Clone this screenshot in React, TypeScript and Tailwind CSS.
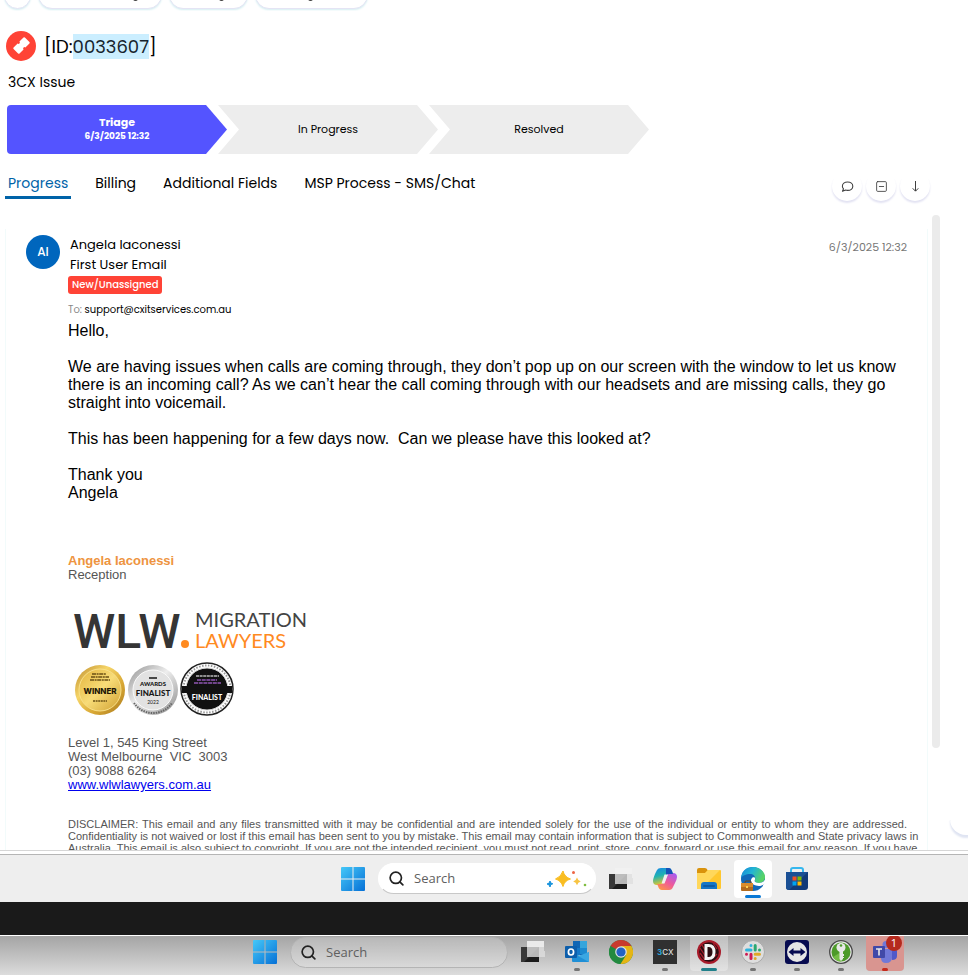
import type { ReactNode } from "react";
import { Search, SquareMinus } from "lucide-react";

const ui = "font-['Poppins','Inter',sans-serif]";

const steps = [
  { label: "Triage", date: "6/3/2025 12:32" },
  { label: "In Progress" },
  { label: "Resolved" },
];

const tabs = ["Progress", "Billing", "Additional Fields", "MSP Process - SMS/Chat"];

const disclaimer = [
  "DISCLAIMER: This email and any files transmitted with it may be confidential and are intended solely for the use of the individual or entity to whom they are addressed.",
  "Confidentiality is not waived or lost if this email has been sent to you by mistake. This email may contain information that is subject to Commonwealth and State privacy laws in",
  "Australia. This email is also subject to copyright. If you are not the intended recipient, you must not read, print, store, copy, forward or use this email for any reason. If you have",
];

const Pill = ({ width, mark }: { width: string; mark?: string }) => (
  <button
    type="button"
    aria-label="Action"
    className={`${width} flex h-7 shrink-0 items-end justify-end rounded-full border border-[#e4e4f4] bg-white pb-[7px] shadow-[0_1px_2px_#d5eef2]`}
  >
    {mark && <span className={`${mark} h-[3px] w-[5px] rounded-b bg-neutral-700`} />}
  </button>
);

const TopActions = () => (
  <div className="flex h-[11px] items-end gap-[7px] overflow-hidden pb-[2px] pl-[4px]">
    <Pill width="w-[27px]" />
    <Pill width="w-[124px]" mark="mr-[23px]" />
    <Pill width="w-[79px]" mark="mr-[23px]" />
    <Pill width="w-[113px]" mark="mr-[54px]" />
  </div>
);

const TicketHeader = () => (
  <header>
    <div className="mt-5 flex items-center gap-2 pl-[6px]">
      <svg viewBox="0 0 30 30" className="size-[30px]" aria-hidden="true">
        <circle cx="15" cy="15" r="15" fill="#ff4336" />
        <path
          d="M-7-4.200h5.700a1.300 1.300 0 0 0 2.600 0H7q1 0 1 1v6.400q0 1-1 1H1.300a1.300 1.300 0 0 0-2.600 0H-7q-1 0-1-1v-6.400q0-1 1-1z"
          fill="#fff"
          transform="translate(15.5 14.500) rotate(-45)"
        />
      </svg>
      <h1 className="pt-[2px] text-[18px] leading-[28px]">
        [ID:<span className="bg-[#cbeeff] text-[#17242e]">0033607</span>]
      </h1>
    </div>
    <p className="mt-[11px] pl-2 text-[14px] leading-5">3CX Issue</p>
  </header>
);

const Steps = () => (
  <ol className="mt-[13px] flex pl-[7px] text-center text-[11px]">
    {steps.map((step, i) => (
      <li
        key={step.label}
        className={
          i === 0
            ? "flex h-[49px] w-[220px] flex-col justify-center rounded-l bg-[#5454ff] pt-px font-bold text-white [clip-path:polygon(0_0,calc(100%_-_21px)_0,100%_50%,calc(100%_-_21px)_100%,0_100%)]"
            : "-ml-[9px] flex h-[49px] w-[220px] flex-col justify-center bg-[#ededed] [clip-path:polygon(0_0,calc(100%_-_21px)_0,100%_50%,calc(100%_-_21px)_100%,0_100%,21px_50%)]"
        }
      >
        <span className="leading-[13px]">{step.label}</span>
        {step.date && <span className="text-[9px] leading-[15px]">{step.date}</span>}
      </li>
    ))}
  </ol>
);

const RoundButton = ({ label, children }: { label: string; children: ReactNode }) => (
  <button
    type="button"
    aria-label={label}
    className="flex size-[30px] shrink-0 items-center justify-center rounded-full bg-white text-neutral-700 shadow-[0_2px_2px_#e2e2f2]"
  >
    {children}
  </button>
);

const TabBar = () => (
  <div className="mt-[16px] flex items-start justify-between pr-[36px] pl-[5px]">
    <nav className="flex gap-[21px] text-[14px] leading-[26px]">
      {tabs.map((tab, i) => (
        <button
          key={tab}
          type="button"
          className={
            i === 0
              ? "border-b-3 border-[#0063a8] px-[3px] text-[#0063a8]"
              : "border-b-3 border-transparent px-[3px]"
          }
        >
          {tab}
        </button>
      ))}
    </nav>
    <div className="mt-[9px] flex h-[26px] items-end gap-1 overflow-hidden px-[2px] pb-[4px]">
      <RoundButton label="Comment">
        <svg viewBox="0 0 13 13" className="size-[13px]" fill="none" stroke="currentColor" strokeWidth="1.100">
          <path d="M1.500 11.300L2.500 8.800Q1.400 7.600 1.400 6.200C1.400 3.800 3.600 2 6.600 2s5.200 1.800 5.200 4.200-2.200 4.200-5.200 4.200q-1 0-1.900-.3z" strokeLinejoin="round" />
        </svg>
      </RoundButton>
      <RoundButton label="Collapse">
        <SquareMinus size={13} strokeWidth={1.6} />
      </RoundButton>
      <RoundButton label="Newest">
        <svg viewBox="0 0 13 13" className="size-[13px]" fill="none" stroke="currentColor" strokeWidth="1">
          <path d="M6.500 1v10M3.700 8.300l2.800 2.900 2.800-2.900" />
        </svg>
      </RoundButton>
    </div>
  </div>
);

const SignatureLogo = () => (
  <svg
    viewBox="0 0 242 114"
    width="242"
    height="114"
    className="mt-[23px] font-['Lato',sans-serif]"
    role="img"
    aria-label="WLW Migration Lawyers"
  >
    <defs>
      <linearGradient id="gold" x2="1" y2="1">
        <stop stopColor="#b9882a" />
        <stop offset=".35" stopColor="#f6d568" />
        <stop offset=".65" stopColor="#d9a834" />
        <stop offset="1" stopColor="#a97a1e" />
      </linearGradient>
      <linearGradient id="goldFace" x2="1" y2="1">
        <stop stopColor="#e3b43c" />
        <stop offset=".5" stopColor="#f8dc78" />
        <stop offset="1" stopColor="#cf9f30" />
      </linearGradient>
      <linearGradient id="silver" x2="1" y2="1">
        <stop stopColor="#8f8f8f" />
        <stop offset=".45" stopColor="#eeeeee" />
        <stop offset="1" stopColor="#8b8b8b" />
      </linearGradient>
    </defs>
    <text x="5" y="43" fontSize="48" fontWeight="500" fill="#353535" className="font-['Roboto',sans-serif]">WLW</text>
    <circle cx="117" cy="39" r="4" fill="#ff8a1f" />
    <text x="127" y="22" fontSize="20" fill="#444">MIGRATION</text>
    <text x="127" y="43" fontSize="20" fill="#ff8a1f">LAWYERS</text>

    <circle cx="32" cy="85" r="25" fill="url(#gold)" />
    <circle cx="32" cy="85" r="21" fill="url(#goldFace)" stroke="#f8e08a" />
    <path d="M24 69h14M23 72h18M22 75h20" stroke="#6b5015" strokeWidth="1.5" strokeDasharray="4 .6 2 .6" />
    <text x="32" y="89" fontSize="8" fontWeight="800" fill="#1d1605" textAnchor="middle" className="font-['Inter',sans-serif]">WINNER</text>
    <path d="M25 96h14" stroke="#6b5015" strokeWidth="1.3" strokeDasharray="2 .6" />

    <circle cx="85" cy="85" r="25" fill="url(#silver)" />
    <circle cx="85" cy="85" r="20" fill="#e2e2e2" stroke="#fafafa" />
    <path d="M66 98a23 23 0 0 0 38 0" fill="none" stroke="#666" strokeWidth="2" strokeDasharray="1.5 1" />
    <g textAnchor="middle" fill="#161616" fontWeight="900">
      <path d="M81 73h8" stroke="#222" strokeWidth="1.6" />
      <text x="85" y="81" fontSize="6">AWARDS</text>
      <text x="85" y="91" fontSize="8">FINALIST</text>
      <text x="85" y="99" fontSize="5" fontWeight="400">2022</text>
    </g>

    <circle cx="139" cy="84" r="26" fill="#fff" stroke="#222" strokeWidth="1.5" />
    <circle cx="139" cy="84" r="23.5" fill="none" stroke="#999" strokeWidth="2" strokeDasharray="1.5 1.5" />
    <circle cx="139" cy="84" r="21" fill="#111" stroke="#ddd" />
    <path d="M114 81h50v7h-50z" fill="#111" />
    <path d="M128 71h23" stroke="#bbb" strokeWidth="1.6" strokeDasharray="3 .6" />
    <path d="M129 75h20M126 78h27" stroke="#70458b" strokeWidth="1.8" strokeDasharray="4 .7" />
    <text x="139" y="95" fontSize="7" fontWeight="900" fill="#fff" textAnchor="middle">FINALIST</text>
  </svg>
);

const Email = () => (
  <article className="ml-[5px] flex min-w-0 flex-1 gap-2 border-x border-[#f2fbfb] pt-[6px] pr-[20px] pl-[20px]">
    <div className="flex size-[34px] shrink-0 items-center justify-center rounded-full bg-[#0066bd] text-[12px] font-medium text-white">
      AI
    </div>
    <div className="min-w-0 flex-1">
      <div className="flex justify-between pl-[2px] text-[13px] leading-5">
        <div>
          <p>Angela Iaconessi</p>
          <p>First User Email</p>
        </div>
        <time className="pt-[2px] text-[11px] text-[#777]">6/3/2025 12:32</time>
      </div>
      <span className="mt-px block w-fit rounded-[3px] bg-[#ff4336] px-[4px] text-[10px] leading-[18px] font-medium text-white">
        New/Unassigned
      </span>
      <p className="mt-[9px] text-[10px] leading-[14px]">
        <span className="text-[#888]">To:</span> support@cxitservices.com.au
      </p>

      <div className="mt-[5px] font-['Liberation_Sans',Arial,sans-serif]">
        <div className="space-y-[18px] text-[16px] leading-[18px]">
          <p>Hello,</p>
          <p>
            We are having issues when calls are coming through, they don’t pop up on our screen with the window to let
            us know there is an incoming call? As we can’t hear the call coming through with our headsets and are
            missing calls, they go straight into voicemail.
          </p>
          <p>This has been happening for a few days now.&nbsp; Can we please have this looked at?</p>
          <p>
            Thank you
            <br />
            Angela
          </p>
        </div>

        <div className="mt-[52px] text-[13px] leading-[14px] text-[#555]">
          <p className="font-bold text-[#ee9440]">Angela Iaconessi</p>
          <p>Reception</p>
        </div>
        <SignatureLogo />
        <address className="mt-[17px] text-[13px] leading-[14px] text-[#555] not-italic">
          Level 1, 545 King Street
          <br />
          West Melbourne&nbsp; VIC&nbsp; 3003
          <br />
          (03) 9088 6264
          <br />
          <a href="#" className="text-[#0000ee] underline">
            www.wlwlawyers.com.au
          </a>
        </address>
        <div className="mt-[26px] h-[32px] overflow-y-clip text-[11px] leading-[12px] text-[#555]">
          {disclaimer.map((line) => (
            <p key={line} className="text-justify whitespace-nowrap [text-align-last:justify]">
              {line}
            </p>
          ))}
        </div>
      </div>
    </div>
  </article>
);

/* Taskbar icons */

const StartIcon = () => (
  <svg viewBox="0 0 24 24" className="size-6">
    <defs>
      <linearGradient id="win" x2="1" y2="1">
        <stop stopColor="#45c8f8" />
        <stop offset="1" stopColor="#0670d6" />
      </linearGradient>
    </defs>
    <path d="M1 0h10.500v11.500H0V1a1 1 0 0 1 1-1zM12.500 0H23a1 1 0 0 1 1 1v10.500H12.500zM0 12.500h11.500V24H1a1 1 0 0 1-1-1zM12.500 12.500H24V23a1 1 0 0 1-1 1H12.500z" fill="url(#win)" />
  </svg>
);

const TaskViewIcon = () => (
  <svg viewBox="0 0 24 24" className="size-6">
    <path d="M0 7h18v15H0z" fill="#1c1c1c" />
    <path d="M0 7h18L3 22H0z" fill="#383838" />
    <path d="M6 1h17v10h1v6H6z" fill="#dedede" opacity=".8" />
    <path d="M6 1h17v6H6z" fill="#fff" opacity=".5" />
  </svg>
);

const CopilotIcon = () => (
  <svg viewBox="0 0 24 24" className="size-6">
    <defs>
      <linearGradient id="cpA" x2=".3" y2="1">
        <stop stopColor="#1687e8" />
        <stop offset=".5" stopColor="#20b3b0" />
        <stop offset="1" stopColor="#e5c62c" />
      </linearGradient>
      <linearGradient id="cpB" x1=".8" x2=".1" y2="1">
        <stop stopColor="#a75df0" />
        <stop offset=".5" stopColor="#ef5a9a" />
        <stop offset="1" stopColor="#ff9b3d" />
      </linearGradient>
    </defs>
    <path d="M8 1h8q2 0 3 3l1 3h-4q-2 0-3 3l-2 6q-1 2-3 2H4q-4 0-4-4 0-2 2-7l2-4Q5 1 8 1Z" fill="url(#cpA)" />
    <path d="M16 23H9q-3 0-4-4l-1-2h4q3 0 4-3l2-5q1-3 3-3h3q4 0 4 4 0 2-2 6l-2 4q-1 3-4 3Z" fill="url(#cpB)" />
    <path d="M13 1h3q2 0 3 3l1 3h-4q-2 0-3 2z" fill="#1652b8" />
    <path d="M11.500 7.500h3.500l-3.500 9H8.500z" fill="#f0f0f0" />
  </svg>
);

const FolderIcon = () => (
  <svg viewBox="0 0 24 24" className="size-6">
    <path d="M0 3q0-2 2-2h6q2 0 3 3v5H0z" fill="#d9920c" />
    <path d="M0 6h8l3-3h12q1 0 1 1v17q0 1-1 1H1q-1 0-1-1z" fill="#ffc72e" />
    <path d="M0 6h8l3-3h12L4 22H1q-1 0-1-1z" fill="#ffd75b" />
    <path d="M4 22v-4q0-3 3-3h10q3 0 3 3v4z" fill="#1476c6" />
    <path d="M7 19h10" stroke="#0d5ba3" strokeWidth="2" strokeLinecap="round" />
  </svg>
);

const EdgeIcon = () => (
  <svg viewBox="0 0 24 24" className="size-6">
    <defs>
      <linearGradient id="edge" x2="1" y2=".4">
        <stop stopColor="#1686d9" />
        <stop offset=".5" stopColor="#22b5d4" />
        <stop offset="1" stopColor="#57d365" />
      </linearGradient>
    </defs>
    <circle cx="12" cy="12" r="12" fill="#1268b8" />
    <path d="M0 11C1 3 6 0 12 0c7 0 12 5 12 10 0 4-3 6-6 6-4 0-5-2-4-3 1-3-1-6-5-6S1 9 0 11z" fill="url(#edge)" />
    <path d="M14 12.500c-1 2 0 3.500 4 3.500 2.500 0 5-1 6-3.500v3.500c-2 3-6 3.500-9 2.500-5-1.500-6.500-5-3.500-8 1.500-.5 3 0 2.500 2z" fill="#fff" />
    <path d="M4 16v-1q0-1 1-1h4q1 0 1 1v1" fill="none" stroke="#714018" />
    <rect y="16" width="12" height="8" rx="1" fill="#b26a1c" />
    <path d="M0 16h12v4H0z" fill="#d98b2b" />
    <path d="M5 19h2v2H5z" fill="#ffd052" />
  </svg>
);

const StoreIcon = () => (
  <svg viewBox="0 0 24 24" className="size-6">
    <path d="M6 6V3q0-2 2-2h8q2 0 2 2v3" fill="none" stroke="#35b7ee" strokeWidth="2" />
    <path d="M1 5h22v15q0 3-3 3H4q-3 0-3-3z" fill="#123a78" />
    <path d="M1 5h22L4 23q-3 0-3-3z" fill="#1a4f94" />
    <path d="M7.500 9.500h4v4h-4z" fill="#f25022" />
    <path d="M12.500 9.500h4v4h-4z" fill="#7fba00" />
    <path d="M7.500 14.500h4v4h-4z" fill="#00a4ef" />
    <path d="M12.500 14.500h4v4h-4z" fill="#ffb900" />
  </svg>
);

const OutlookIcon = () => (
  <svg viewBox="0 0 24 24" className="size-6">
    <path d="M8 1h14v14H8z" fill="#1066b5" />
    <path d="M15 1h7v7h-7z" fill="#35a5dc" />
    <path d="M8 8h7v7H8z" fill="#1478c8" />
    <path d="M15 8h7v6h-7z" fill="#1c8ad0" />
    <path d="M7 12h1l8 5 8-5v9q0 1-1 1H8q-1 0-1-1z" fill="#1f8fd6" />
    <path d="M24 12v10L13 16z" fill="#3aa7e2" />
    <rect y="6" width="12" height="12" rx="1" fill="#0d5eab" />
    <ellipse cx="6" cy="12" rx="2.600" ry="3" fill="none" stroke="#fff" strokeWidth="1.700" />
  </svg>
);

const ChromeIcon = () => (
  <svg viewBox="0 0 24 24" className="size-6">
    <circle cx="12" cy="12" r="12" fill="#238a40" />
    <path d="M12 6h10.400A12 12 0 0 1 11.500 24l5.700-9z" fill="#e5b514" />
    <path d="M12 12L1.600 6A12 12 0 0 1 22.400 6H12z" fill="#c93a2e" />
    <path d="M1.600 6L6.800 15 11.500 24A12 12 0 0 1 1.600 6z" fill="#238a40" />
    <circle cx="12" cy="12" r="5.800" fill="#e4e4e4" />
    <circle cx="12" cy="12" r="4.600" fill="#2463c4" />
  </svg>
);

const ThreeCxIcon = () => (
  <svg viewBox="0 0 24 24" className="size-6 font-['Inter',sans-serif]">
    <path d="M0 0h24v24H0z" fill="#303030" />
    <text x="4" y="15" fontSize="8" fontWeight="700" fill="#2aa5d8">
      3<tspan fill="#ddd" fontWeight="500">CX</tspan>
    </text>
  </svg>
);

const DIcon = () => (
  <svg viewBox="0 0 24 24" className="size-6">
    <circle cx="12" cy="12" r="12" fill="#a81b2a" />
    <circle cx="12" cy="12" r="9.800" fill="#2b0c10" />
    <path d="M3 8l6 9M5 5l5 8M3 13l5 7M16 3l4 6M17 17l3-3" stroke="#a31d2b" strokeWidth="1.300" />
    <path d="M9 5.500v13h2.500q5.500 0 5.500-6.500t-5.500-6.500z" fill="#2b0c10" stroke="#f4f4f4" strokeWidth="3" />
  </svg>
);

const SlackIcon = () => (
  <svg viewBox="0 0 24 24" className="size-6">
    <circle cx="12" cy="12" r="11.500" fill="#dedede" stroke="#aaa" />
    <g strokeWidth="3" strokeLinecap="round">
      <path d="M10 5.500v0M5.500 10h4.500" stroke="#2fb3dd" />
      <path d="M14.200 5.500v4.500M18.500 10h0" stroke="#2aa872" />
      <path d="M14.200 14.200h4.300M14.200 18.500h0" stroke="#dfa728" />
      <path d="M10 14.200v4.300M5.500 14.200h0" stroke="#cd1a53" />
    </g>
  </svg>
);

const TeamViewerIcon = () => (
  <svg viewBox="0 0 24 24" className="size-6">
    <rect width="24" height="24" rx="3" fill="#070b50" />
    <circle cx="12" cy="12" r="10" fill="#e6e6e6" />
    <path d="M3.500 12L8.500 8v2.600h7V8l5 4-5 4v-2.600h-7V16z" fill="#070b50" />
  </svg>
);

const KeyIcon = () => (
  <svg viewBox="0 0 24 24" className="size-6">
    <circle cx="12" cy="12" r="11.300" fill="#e4e4e4" stroke="#484848" strokeWidth="1.300" />
    <circle cx="12" cy="12" r="9.500" fill="#4d9a2a" />
    <path d="M4 17a9.500 9.500 0 0 0 8 4.500V12z" fill="#74bc45" />
    <circle cx="12" cy="7.500" r="4.500" fill="#e8e8e8" />
    <circle cx="12" cy="5.500" r="1.300" fill="#4d9a2a" />
    <path d="M10.500 11h3.500v8l-2 2-1.500-2z" fill="#e8e8e8" />
    <path d="M14 14h1v2h-1zM14 17h1v1h-1z" fill="#e8e8e8" />
  </svg>
);

const TeamsIcon = () => (
  <svg viewBox="0 0 24 24" className="size-6">
    <circle cx="20" cy="7" r="2.500" fill="#5a62c8" />
    <path d="M17 10h6q1 0 1 1v5q0 4-5 4z" fill="#5059c9" />
    <circle cx="13" cy="4.500" r="3.500" fill="#7078d8" />
    <path d="M8 9h11v8q0 6-6 6-5 0-5-5z" fill="#7078d8" />
    <rect y="6" width="12" height="12" rx="1" fill="#4149a8" />
    <path d="M3 9h6M6 9v6.500" stroke="#e8e8e8" strokeWidth="1.600" />
  </svg>
);

const Sparkles = () => (
  <svg viewBox="0 0 40 18" width="40" height="18" aria-hidden="true">
    <path d="M16 1q1.500 6 7.500 8-6 1.500-7.500 7.500Q14 10.500 8.500 9 14 7 16 1z" fill="#f9bd22" stroke="#f9bd22" strokeLinejoin="round" />
    <path d="M30 7.500q.8 3 3.800 4-3 .8-3.800 3.800-.8-3-3.800-3.800 3-1 3.800-4z" fill="#f7c443" />
    <path d="M3 11l.8 2 2 .8-2 .8L3 17l-1-2.200L0 14l2-.8z" fill="#1793dd" stroke="#1793dd" />
    <circle cx="26.500" cy="2.500" r="1.500" fill="#ee6544" />
    <circle cx="38" cy="15" r="1.300" fill="#80bd40" />
  </svg>
);

interface TaskProps {
  name: string;
  children: ReactNode;
  slot?: string;
  indicator?: string;
  badge?: string;
}

const Task = ({ name, children, slot = "", indicator, badge }: TaskProps) => (
  <button
    type="button"
    aria-label={name}
    className={`relative flex h-[38px] w-[38px] shrink-0 items-center justify-center rounded ${slot}`}
  >
    {children}
    {indicator && (
      <span className={`absolute bottom-0 left-1/2 h-[3px] -translate-x-1/2 rounded-full ${indicator}`} />
    )}
    {badge && (
      <span className="absolute top-[2px] right-[2px] flex size-4 items-center justify-center rounded-full bg-[#b52a1e] text-[11px] text-white">
        {badge}
      </span>
    )}
  </button>
);

const SearchBox = ({ id, look, sparkle }: { id: string; look: string; sparkle?: boolean }) => (
  <label
    htmlFor={id}
    className={`flex h-[31px] w-[218px] shrink-0 items-center rounded-full border pr-[8px] pl-[9px] ${look}`}
  >
    <Search size={17} strokeWidth={2.4} className="shrink-0 text-[#222]" />
    <input
      id={id}
      type="text"
      placeholder="Search"
      className="ml-[9px] min-w-0 flex-1 text-[13px] outline-none placeholder:text-[#606060]"
    />
    {sparkle && <Sparkles />}
  </label>
);

const dot = "w-[6px] bg-[#757575]";

export default function App() {
  return (
    <div className={`overflow-hidden bg-white text-black ${ui}`}>
      <main className="relative overflow-hidden">
        <TopActions />
        <TicketHeader />
        <Steps />
        <TabBar />
        <div className="mt-[24px] flex pr-[28px]">
          <Email />
          <div className="-mt-[14px] mb-[102px] ml-1 w-2 shrink-0 rounded-full bg-[#ebebeb]" />
        </div>
        <button
          type="button"
          aria-label="Scroll to end"
          className="absolute -right-[14px] bottom-[15px] size-8 rounded-full bg-white shadow-[0_3px_2px_#dfe4f2] [clip-path:inset(55%_-4px_-8px_-4px)]"
        />
      </main>

      <div className="font-['Open_Sans','Noto_Sans',sans-serif]">
        <div className="h-[5px] border-t border-b border-t-[#d6d6d6] border-b-[#b5b5b5] bg-white" />
        <div className="flex h-[47px] items-center justify-center gap-[6px] bg-[#eeeeee] pl-[182px]">
          <Task name="Start">
            <StartIcon />
          </Task>
          <SearchBox id="search-top" look="border-white border-b-[#c8c8c8] bg-white" sparkle />
          <Task name="Task view">
            <TaskViewIcon />
          </Task>
          <Task name="Copilot">
            <CopilotIcon />
          </Task>
          <Task name="File Explorer">
            <FolderIcon />
          </Task>
          <Task name="Edge" slot="bg-white" indicator="w-4 bg-[#0a78d4]">
            <EdgeIcon />
          </Task>
          <Task name="Store">
            <StoreIcon />
          </Task>
        </div>
        <div className="h-[33px] bg-[#1a1a1a]" />
        <div className="flex h-[40px] items-end justify-center gap-[6px] overflow-hidden border-t border-white bg-linear-to-b from-[#a4a4a4] to-[#dcdcdc] pb-1 pl-[182px]">
          <Task name="Start">
            <StartIcon />
          </Task>
          <SearchBox id="search-bottom" look="mb-[3px] border-[#b4b4b4] bg-white/20" />
          <Task name="Task view">
            <TaskViewIcon />
          </Task>
          <Task name="Outlook" indicator={dot}>
            <OutlookIcon />
          </Task>
          <Task name="Chrome">
            <ChromeIcon />
          </Task>
          <Task name="3CX" indicator={dot}>
            <ThreeCxIcon />
          </Task>
          <Task name="Desk" slot="bg-white/30" indicator="w-4 bg-[#20808a]">
            <DIcon />
          </Task>
          <Task name="Slack" indicator={dot}>
            <SlackIcon />
          </Task>
          <Task name="TeamViewer" indicator={dot}>
            <TeamViewerIcon />
          </Task>
          <Task name="KeePass" indicator={dot}>
            <KeyIcon />
          </Task>
          <Task name="Teams" slot="bg-[#d99590]" indicator="w-[6px] bg-[#c42b1c]" badge="1">
            <TeamsIcon />
          </Task>
        </div>
      </div>
    </div>
  );
}
